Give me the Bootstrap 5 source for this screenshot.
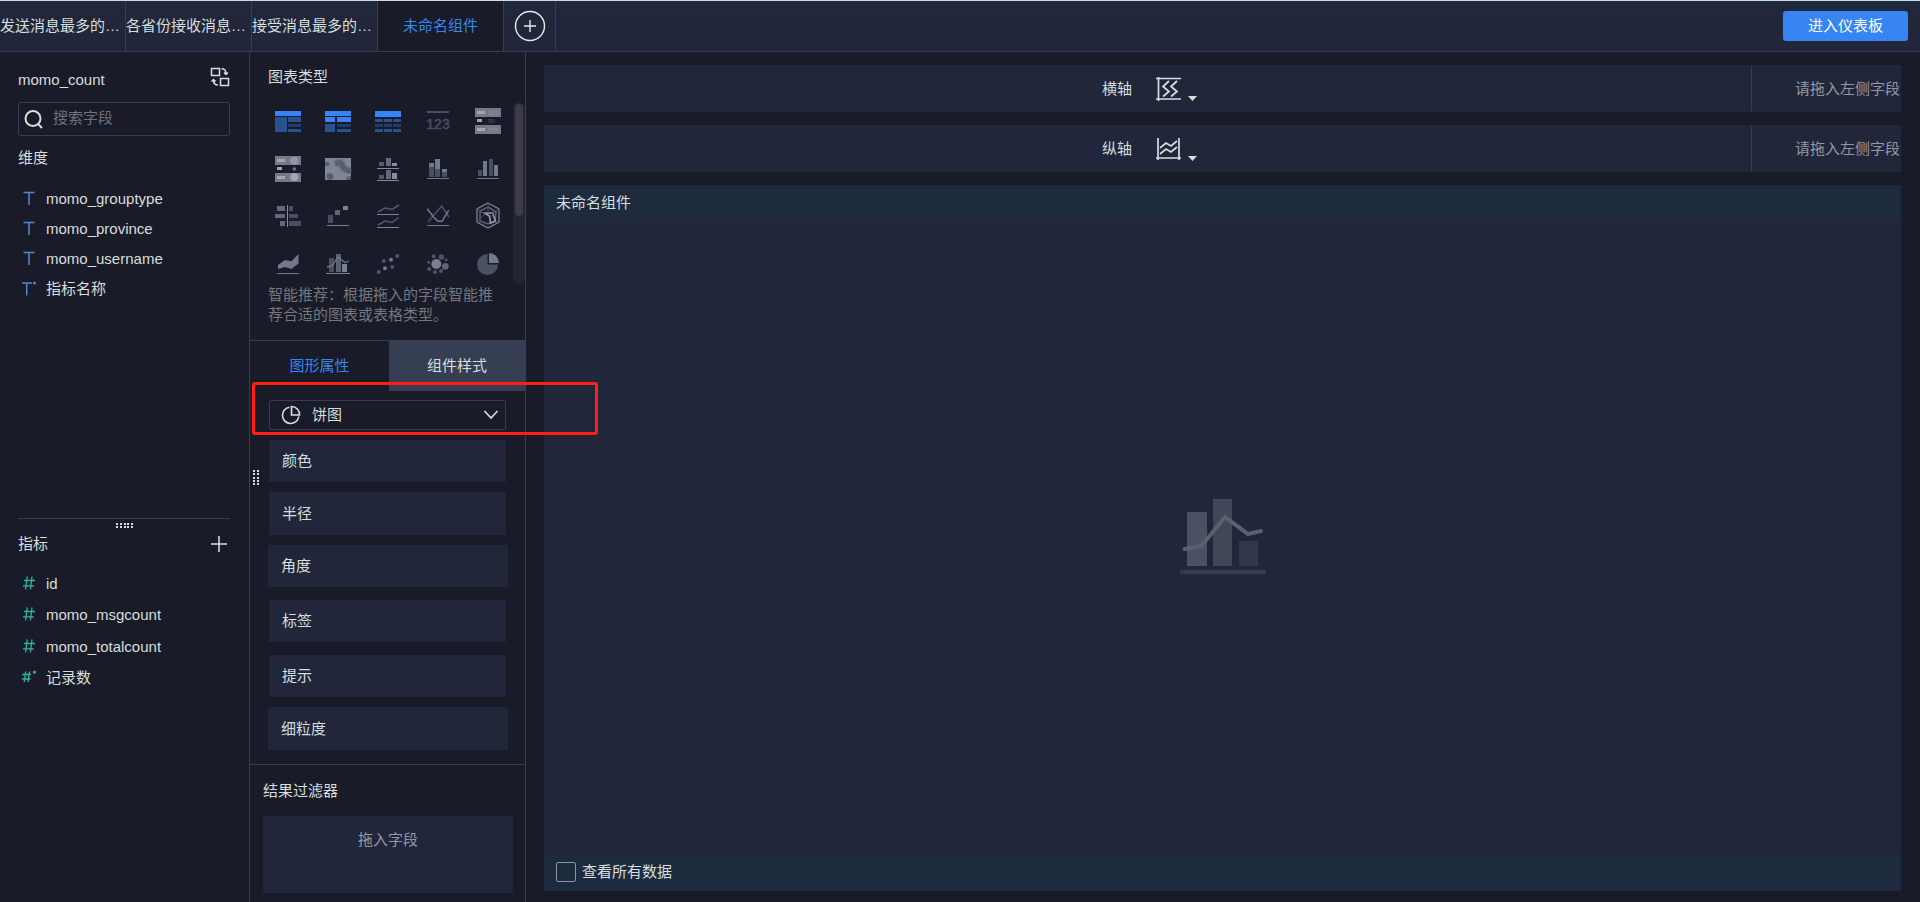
<!DOCTYPE html>
<html lang="zh-CN">
<head>
<meta charset="utf-8">
<meta name="viewport" content="width=device-width, initial-scale=1">
<title>未命名组件</title>
<link href="https://cdn.jsdelivr.net/npm/bootstrap@5.3.0/dist/css/bootstrap.min.css" rel="stylesheet">
<style>
:root{--bg:#1a1b28;--surface:#21263b;--line:#363e54;--teal:#1e2b3e;--txt:#d5dfdd;--muted:#9298a5;--blue:#3685f2}
body{background:var(--bg);color:var(--txt);font:15px/20px "Liberation Sans","Noto Sans CJK SC",sans-serif}
button{font:inherit;color:inherit;background:none;border:0;padding:0}
svg{display:block;flex:none}
h2{font-size:15px;line-height:20px;font-weight:400;margin:0}
ul{list-style:none;margin:0;padding:0}
a{color:inherit;text-decoration:none}

.topbar{height:52px;background:linear-gradient(var(--teal),var(--surface) 12px);border-top:1px solid #d0dada;border-bottom:1px solid var(--line)}
.doc-tab{width:126px;border-right:1px solid var(--line);display:flex;align-items:center;white-space:nowrap}
.doc-tab.current{background:var(--bg);color:var(--blue);justify-content:center}
.tab-add{width:52px;border-right:1px solid var(--line)}
.enter{width:125px;height:30px;border-radius:3px;background:var(--blue);color:#fff;margin-right:12px}

.fields{width:250px;border-right:1px solid var(--line);padding:0 19px 0 18px}
.source{height:50px}
.source h2{padding-top:18px}
.search{height:34px;border:1px solid var(--line);border-radius:2px;padding:0 5px}
.search input{background:none;border:0;outline:0;color:var(--txt);min-width:0;padding:0 0 2px 0;margin-left:9px}
.search input::placeholder{color:#6c7183;opacity:1}
.field{height:30px;padding-left:4px}
.field svg{width:20px;margin-right:4px}
.measures{flex:0 0 384px;border-top:1px solid var(--line);position:relative}
.measures-head{margin:15px 0;padding-right:3px}
.measures .list{display:grid;gap:1px}
.measures .field:nth-child(even){margin-bottom:1px}
.grip-h{left:98px;top:3px}

.config{width:276px;border-right:1px solid var(--line);position:relative}
.config-title{padding:15px 0 11px 18px}
.chart-grid{display:grid;grid-template-columns:repeat(5,50px);grid-auto-rows:47px;padding-left:13px}
.chart-grid button{display:flex;align-items:center;justify-content:center}
.chart-area{position:relative}
.track{position:absolute;right:0;top:4px;width:12px;height:182px;border-radius:6px;background:#242532;padding:2px}
.thumb{height:112px;border-radius:4px;background:#3b3c48}
.hint{color:#74777e;margin:-1px 28px 0 18px}
.prop-tabs{border-top:1px solid var(--line);height:51px;margin-top:15px}
.prop-tabs button{width:139px;color:var(--blue)}
.prop-tabs button+button{flex:1;background:var(--line);color:var(--txt)}
.kind{position:relative;margin:9px 19px 10px;height:30px}
.kind select{width:100%;height:30px;appearance:none;background:none;border:1px solid var(--line);border-radius:2px;color:var(--txt);padding:0 30px 0 42px;outline:0}
.kind select option{background:var(--bg)}
.kind svg{position:absolute;pointer-events:none;top:5px}
.kind .pie{left:12px}
.kind .chev{right:7px}
.props{display:flex;flex-direction:column;gap:10px}
.props button{height:42px;margin:0 19px;padding-left:13px;text-align:left;background:var(--surface)}
.props .wide{margin:0 17px 0 18px}
.props .tall{height:43px}
.props .apart{margin-bottom:3px}
.filter{border-top:1px solid var(--line);margin-top:14px;padding:16px 12px 9px 13px}
.drop{height:77px;background:var(--surface);color:var(--muted);padding-top:14px;margin-top:15px;text-align:center}
.grip-v{position:absolute;left:3px;top:418px}
.callout{position:absolute;left:2px;top:330px;width:346px;height:53px;border:3px solid #ff1f13;border-radius:3px;pointer-events:none;z-index:2}

.work{padding:13px 19px 11px 18px;gap:13px}
.axis{height:47px;background:var(--surface)}
.axis .place{width:150px;height:45px;border-left:1px solid var(--line);color:var(--muted);display:flex;align-items:center;justify-content:flex-end;padding-right:1px;white-space:nowrap}
.axis button{margin-left:24px;display:flex;align-items:flex-end;gap:7px}
.canvas-panel{background:var(--surface)}
.canvas-head{height:35px;background:var(--teal);padding-left:12px}
.canvas-foot{height:38px;background:var(--teal);padding-left:12px;gap:6px}
.canvas-foot input{appearance:none;width:20px;height:20px;border:1px solid #8f93a3;border-radius:2px;margin:0}
.canvas-foot input:checked{background:var(--blue)}
</style>
</head>
<body>
<svg width="0" height="0" class="position-absolute" aria-hidden="true">
  <defs>
    <symbol id="dim" viewBox="0 0 20 20"><path d="M1.500 3.500h11M7 3.500V16" stroke="#5884cd" stroke-width="1.500" fill="none"/></symbol>
    <symbol id="num" viewBox="0 0 20 20"><path d="M5.200 2.500 3.600 15.500M10 2.500 8.400 15.500M2 6.500h11M1 11.800h11" stroke="#2fb3a2" stroke-width="1.300" fill="none"/></symbol>
  </defs>
</svg>
<div class="d-flex flex-column min-vh-100">
  <header class="topbar d-flex">
    <nav class="d-flex" aria-label="组件">
      <a href="#" class="doc-tab">发送消息最多的…</a>
      <a href="#" class="doc-tab">各省份接收消息…</a>
      <a href="#" class="doc-tab">接受消息最多的…</a>
      <a href="#" class="doc-tab current" aria-current="page">未命名组件</a>
    </nav>
    <button class="tab-add d-flex align-items-center justify-content-center" aria-label="新建组件">
      <svg width="32" height="32" viewBox="0 0 32 32" fill="none" stroke="#e4ebea" stroke-width="1.400"><circle cx="16" cy="16" r="14.500"/><path d="M10 16h12M16 10v12"/></svg>
    </button>
    <button class="enter ms-auto align-self-center">进入仪表板</button>
  </header>

  <div class="d-flex flex-grow-1">
    <aside class="fields d-flex flex-column flex-shrink-0">
      <section class="flex-grow-1">
        <div class="source d-flex justify-content-between">
          <h2>momo_count</h2>
          <button aria-label="切换数据" class="align-self-center">
            <svg width="20" height="20" viewBox="0 0 20 20" fill="none" stroke="#d5dfdd" stroke-width="1.500"><path d="M1.500 1.500h8v7h-8zM10.500 11.500h8v7h-8zM11.500 1.800q4.500 0 4.500 5M14 5.500l2 2 2-2M8 18q-4.500 0-4.500-5M1.500 14.500l2-2 2 2"/></svg>
          </button>
        </div>
        <div class="search d-flex align-items-center">
          <svg width="20" height="20" viewBox="0 0 20 20" fill="none" stroke="#d5dfdd" stroke-width="2"><circle cx="9" cy="9.500" r="7.500"/><path d="m14 15 4 4"/></svg>
          <input class="flex-grow-1" type="text" placeholder="搜索字段" aria-label="搜索字段">
        </div>
        <h2 class="mt-2 pt-1 mb-3">维度</h2>
        <ul class="pb-4">
          <li class="field d-flex align-items-center"><svg height="20"><use href="#dim"/></svg>momo_grouptype</li>
          <li class="field d-flex align-items-center"><svg height="20"><use href="#dim"/></svg>momo_province</li>
          <li class="field d-flex align-items-center"><svg height="20"><use href="#dim"/></svg>momo_username</li>
          <li class="field d-flex align-items-center"><svg height="20" viewBox="0 0 20 20" fill="none" stroke="#5884cd"><path d="M-.5 4h10.500M4.700 4v12.500" stroke-width="1.500"/><path d="M12.500 2.500v3M11 3.500l3 1.300M14 3.500l-3 1.300"/></svg>指标名称</li>
        </ul>
      </section>
      <section class="measures">
        <svg class="grip-h position-absolute" width="17" height="6" fill="#d5dfdd"><path d="M0 1h2v2H0zM4 1h2v2H4zM8 1h2v2H8zM11 1h2v2h-2zM15 1h2v2h-2zM0 4h2v2H0zM4 4h2v2H4zM8 4h2v2H8zM11 4h2v2h-2zM15 4h2v2h-2z"/></svg>
        <div class="measures-head d-flex justify-content-between align-items-center">
          <h2>指标</h2>
          <button aria-label="新建指标"><svg width="16" height="16" stroke="#d5dfdd" stroke-width="1.500"><path d="M0 8h16M8 0v16"/></svg></button>
        </div>
        <ul class="list">
          <li class="field d-flex align-items-center"><svg height="20"><use href="#num"/></svg>id</li>
          <li class="field d-flex align-items-center"><svg height="20"><use href="#num"/></svg>momo_msgcount</li>
          <li class="field d-flex align-items-center"><svg height="20"><use href="#num"/></svg>momo_totalcount</li>
          <li class="field d-flex align-items-center"><svg height="20" viewBox="0 0 20 20" fill="none" stroke="#2fb3a2" stroke-width="1.300"><path d="M3.700 3.500 2.200 14M7.500 3.500 6 14M.2 6.500H9M-.3 11h8.800"/><path d="M12.500 2.500V6M10.800 3.500l3.400 1.500M14.200 3.500l-3.400 1.500" stroke-width="1"/></svg>记录数</li>
        </ul>
      </section>
    </aside>

    <section class="config flex-shrink-0">
      <div class="callout"></div>
      <svg class="grip-v" width="6" height="16" fill="#d5dfdd"><path d="M0 0h2v2H0zM4 0h2v2H4zM0 3h2v2H0zM4 3h2v2H4zM0 7h2v2H0zM4 7h2v2H4zM0 10h2v2H0zM4 10h2v2H4zM0 13h2v2H0zM4 13h2v2H4z"/></svg>
      <h2 class="config-title">图表类型</h2>
      <div class="chart-area">
        <div class="chart-grid">
          <button aria-label="分组表"><svg width="30" height="30"><path fill="#3685f2" d="M2 4h26v5H2z"/><path fill="#28528f" d="M2 10h12v15H2zM15 10h13v5H15zM15 22h13v3H15z"/><path fill="#1f3c6a" d="M15 17h13v3H15z"/></svg></button>
          <button aria-label="交叉表"><svg width="30" height="30"><path fill="#3685f2" d="M2 4h26v5H2zM2 10h10v5H2zM14 10h14v5H14z"/><path fill="#28528f" d="M2 17h10v8H2zM14 22h14v3H14z"/><path fill="#1f3c6a" d="M14 17h14v3H14z"/></svg></button>
          <button aria-label="明细表"><svg width="30" height="30"><path fill="#3685f2" d="M2 4h26v6H2z"/><path fill="#28528f" d="M2 12h8v3H2zM11 12h8v3h-8zM20 12h8v3h-8zM2 22h8v3H2zM11 22h8v3h-8zM20 22h8v3h-8z"/><path fill="#1f3c6a" d="M2 17h8v3H2zM11 17h8v3h-8zM20 17h8v3h-8z"/></svg></button>
          <button aria-label="指标卡"><svg width="30" height="30" fill="#484f62"><path d="M4 4h22v2H4z"/><text x="15" y="22" text-anchor="middle" font-family="Liberation Sans" font-size="14" stroke="#484f62" stroke-width=".5">123</text></svg></button>
          <button aria-label="颜色表格"><svg width="30" height="30"><path fill="#747a88" d="M2 1h26v9H2zM2 18h26v9H2z"/><path fill="#a4a6ac" d="M4 4h8v3H4zM4 21h8v3H4zM4 12h5v3H4z"/><g fill="#8c93a3" font-size="6"><text x="15" y="8">123</text><text x="15" y="16" fill="#555b6c">90</text><text x="15" y="25">278</text></g></svg></button>

          <button aria-label="热力点图"><svg width="30" height="30"><path fill="#747a88" d="M2 2h26v9H2zM2 19h26v9H2z"/><path fill="#a4a6ac" d="M4 5h8v3H4zM4 22h8v3H4zM4 13h5v3H4z"/><circle cx="21.300" cy="6.700" r="4" fill="#8f98a8"/><circle cx="21.300" cy="15" r="1.800" fill="#6b7080"/><circle cx="21.300" cy="23" r="4" fill="#a0a6b4"/></svg></button>
          <button aria-label="热力区域图"><svg width="30" height="30"><path fill="#7f8592" d="M2 4h26v22H2z"/><g fill="none" stroke-linecap="round"><path stroke-width="8" d="M15 9q4-1 4 2t5 5" stroke="#6f7686"/><path stroke-width="5" d="M14.500 9q4-1 4.500 2t7 6" stroke="#555d70"/></g><g fill="#555d70"><path d="M2 8h3q3 2 0 4H2z"/><circle cx="7" cy="22.500" r="3.300"/><path d="M23 26q0-4 5-4v4z"/></g></svg></button>
          <button aria-label="多系列柱形图"><svg width="30" height="30"><path fill="#535a6c" d="M6 8h5v4H6zM6 21h5v4H6z"/><path fill="#636978" d="M13 4h5v8h-5zM13 16h5v9h-5z"/><path fill="#878c99" d="M19 9h5v3h-5zM19 19h5v6h-5zM4 14h22v1H4zM4 26h22v1H4z"/></svg></button>
          <button aria-label="堆积柱形图"><svg width="30" height="30"><path fill="#484f62" d="M6 13h5v10H6zM12 15h5v8h-5zM19 18h5v5h-5z"/><path fill="#737987" d="M6 9h5v4H6zM12 5h5v10h-5zM19 15h5v3h-5zM4 24h22v1H4z"/></svg></button>
          <button aria-label="柱形图"><svg width="30" height="30"><path fill="#484f62" d="M5 16h4v6H5zM16 5h4v17h-4z"/><path fill="#737987" d="M10 7h4v15h-4zM21 11h4v11h-4zM4 24h22v1H4z"/></svg></button>

          <button aria-label="对比柱形图"><svg width="30" height="30"><path fill="#636978" d="M4 5h8v5H4zM2 13h10v4H2zM7 20h5v5H7z"/><path fill="#484f62" d="M16 5h4v5h-4zM16 13h9v4h-9zM16 20h12v5H16z"/><path fill="#878c99" d="M14 4h1v22h-1z"/></svg></button>
          <button aria-label="瀑布图"><svg width="30" height="30"><path fill="#484f62" d="M5 14h5v8H5z"/><path fill="#5f6575" d="M12 9h5v5h-5z"/><path fill="#7b808e" d="M20 5h5v4h-5zM4 24h22v1H4z"/></svg></button>
          <button aria-label="多系列折线图"><svg width="30" height="30" fill="none" stroke="#535a6c" stroke-width="1.500"><path d="m5 11 7-4 7 1.500L26 4M5 24l7-4 7 1.500 7-5"/><path d="M4 13.500h22M4 26.500h22" stroke="#7b808e" stroke-width="1"/></svg></button>
          <button aria-label="折线图"><svg width="30" height="30" fill="none" stroke="#4b5265" stroke-width="1.500"><path d="M5 20.700 18.700 5 26 16"/><path stroke="#737987" d="m4.300 7.700 6.400 8.600 4.300 4 4 0 6.700-11"/><path stroke="#737987" stroke-width="1" d="M4 24.500h22"/></svg></button>
          <button aria-label="雷达图"><svg width="30" height="30" fill="none" stroke="#7b808e"><path stroke-width="1.300" d="m15 2 11 6v13l-11 6-11-6V8z"/><path stroke="#5b6273" stroke-width="1.500" d="m15 6 8 5-1 9-7 3-8-3V10z"/><path stroke="#9298a8" stroke-width="1.700" d="M11.500 12h8l3 8-5 2-1-7z"/><path stroke="#4b5265" d="M15 2v10M4 8l8 5-8 8M26 8l-7 5"/></svg></button>

          <button aria-label="面积图"><svg width="30" height="30" fill="#737987"><path d="M5 21v-4l7-5 6.500 1.300L25.500 6v9.500L18.500 21 12 19zM4 25h22v1H4z"/></svg></button>
          <button aria-label="组合图"><svg width="30" height="30"><path fill="#484f62" d="M6 10h5v14H6z"/><path fill="#5b6172" d="M13 6h5v18h-5z"/><path fill="#7b808e" d="M19 16h5v8h-5zM3 25h24v1H3z"/><path d="m4 19 5-1 6-9 7 5.500 4-1.500" fill="none" stroke="#737987" stroke-width="1.300"/></svg></button>
          <button aria-label="散点图"><svg width="30" height="30" fill="#4d5468"><circle cx="5.700" cy="24" r="2"/><circle cx="10.700" cy="13" r="2"/><circle cx="19.300" cy="19" r="2"/><circle cx="24.300" cy="8" r="2"/><circle cx="12" cy="20.300" r="2" fill="#737987"/><circle cx="18" cy="11.700" r="2" fill="#737987"/></svg></button>
          <button aria-label="聚合气泡图"><svg width="30" height="30" fill="#4d5468"><circle cx="13.300" cy="16" r="5" fill="#7b808e"/><circle cx="18.300" cy="9" r="2.700"/><circle cx="22.300" cy="18.300" r="3.400" fill="#5f6678"/><circle cx="10.700" cy="8.300" r="2"/><circle cx="6.300" cy="21" r="2"/><circle cx="12" cy="24" r="2"/><circle cx="18" cy="23" r="2"/><circle cx="5.700" cy="14.300" r="1.500"/><circle cx="23" cy="11.700" r="1.500"/></svg></button>
          <button aria-label="饼图"><svg width="30" height="30"><path fill="#4b5265" d="M14.500 6A10.500 10.500 0 1 0 25 16.500H14.500z"/><path fill="#737987" d="M16 5a10 10 0 0 1 10 10H16z"/></svg></button>
        </div>
        <div class="track"><div class="thumb"></div></div>
      </div>
      <p class="hint">智能推荐：根据拖入的字段智能推荐合适的图表或表格类型。</p>

      <div class="prop-tabs d-flex">
        <button>图形属性</button>
        <button>组件样式</button>
      </div>
      <div class="kind">
        <select aria-label="图形"><option>饼图</option><option>柱形图</option><option>折线图</option></select>
        <svg class="pie" width="20" height="20" fill="none" stroke="#d5dfdd" stroke-width="1.600"><path d="M8.500 2.200A8.200 8.200 0 1 0 17.800 11.500"/><path d="M10.500 1.500a8 8 0 0 1 8 8.500h-8z"/></svg>
        <svg class="chev" width="16" height="20" fill="none" stroke="#d5dfdd" stroke-width="1.700"><path d="m1.500 6 6.500 7 6.500-7"/></svg>
      </div>
      <div class="props">
        <button>颜色</button>
        <button class="tall">半径</button>
        <button class="wide apart">角度</button>
        <button class="apart">标签</button>
        <button>提示</button>
        <button class="wide tall">细粒度</button>
      </div>
      <div class="filter">
        <h2>结果过滤器</h2>
        <div class="drop">拖入字段</div>
      </div>
    </section>

    <main class="work d-flex flex-column flex-grow-1">
      <div class="axis d-flex align-items-center">
        <div class="flex-grow-1 d-flex align-items-center justify-content-center ps-1">横轴
          <button aria-label="横轴设置">
            <svg width="25" height="24" fill="none" stroke="#d5dfdd" stroke-width="1.700"><path d="M0 1.500h25M2.500 0v24M0 22h25"/><path d="m13 4-6 5.500 6 5-6 5M21 4l-6 5.500 6 5-6 5"/></svg>
            <svg width="9" height="5" fill="#d5dfdd"><path d="M0 0h9L4.500 5z"/></svg>
          </button>
        </div>
        <div class="place">请拖入左侧字段</div>
      </div>
      <div class="axis d-flex align-items-center">
        <div class="flex-grow-1 d-flex align-items-center justify-content-center ps-1">纵轴
          <button aria-label="纵轴设置">
            <svg width="25" height="24" fill="none" stroke="#d5dfdd" stroke-width="1.700"><path d="M2 1v22M23 1v22M0 21h25"/><path d="m4 11 6-5 5 3 6-5M4 17l6-5 5 3 6-5"/></svg>
            <svg width="9" height="5" fill="#d5dfdd"><path d="M0 0h9L4.500 5z"/></svg>
          </button>
        </div>
        <div class="place">请拖入左侧字段</div>
      </div>
      <section class="canvas-panel d-flex flex-column flex-grow-1">
        <div class="canvas-head d-flex align-items-center"><h2>未命名组件</h2></div>
        <div class="flex-grow-1 d-flex align-items-center justify-content-center">
          <svg width="86" height="76" viewBox="0 0 86 76"><path fill="#4b5062" d="M7 13h20v54H7z"/><path fill="#414659" d="M33 0h19v67H33z"/><path fill="#33374b" d="M59 42h19v25H59z"/><path d="M2 73h82" stroke="#373b4f" stroke-width="4.500" stroke-linecap="round"/><path d="m4.500 50 17-3L45 18l23 17 13-3" fill="none" stroke="#5b6071" stroke-width="4" stroke-linecap="round"/></svg>
        </div>
        <div class="canvas-foot d-flex align-items-center"><input type="checkbox" id="all"><label for="all">查看所有数据</label></div>
      </section>
    </main>
  </div>
</div>
<script src="https://cdn.jsdelivr.net/npm/bootstrap@5.3.0/dist/js/bootstrap.bundle.min.js"></script>
</body>
</html>
